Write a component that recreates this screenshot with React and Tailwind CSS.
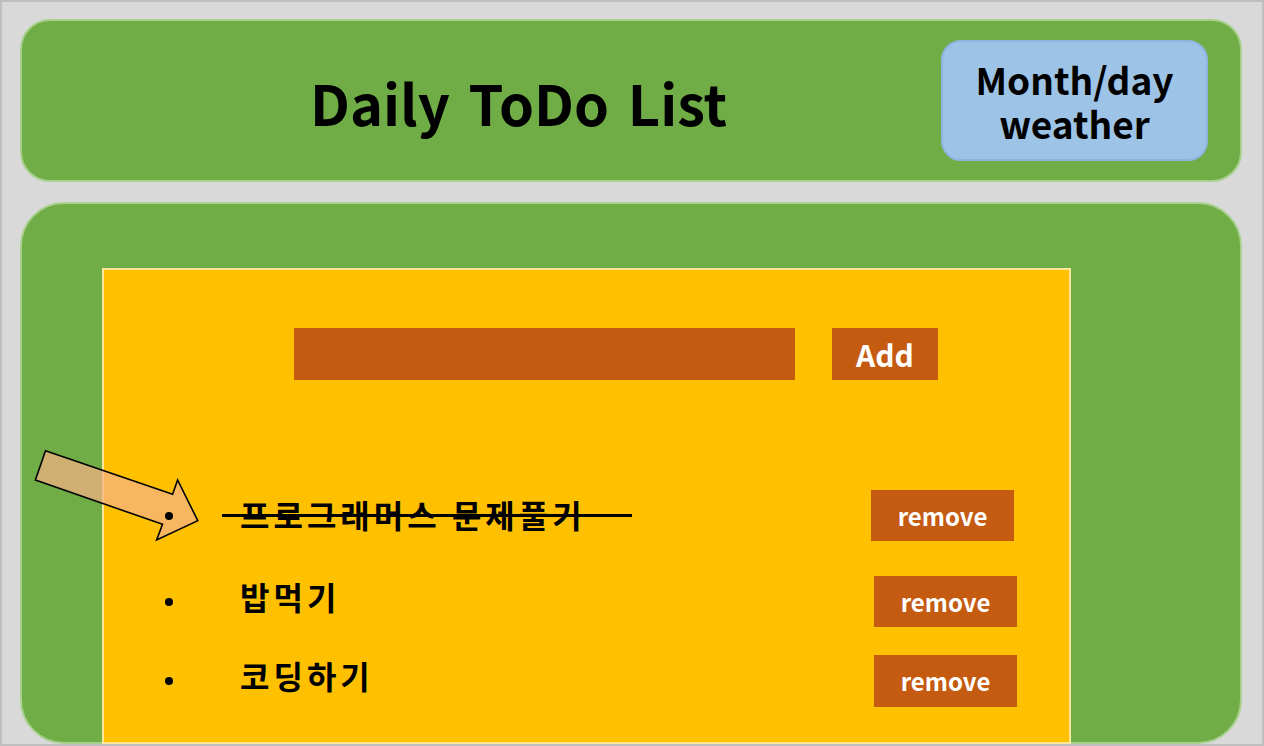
import React from 'react';

const font = { fontFamily: '"Noto Sans CJK KR", "Noto Sans", sans-serif' };

const todos = [
  { text: '프로그래머스 문제풀기', done: true, gapTop: 'mt-[110px]', h: 'h-[51px]', nudge: '-top-[2px]', btnMr: 'mr-[55px]' },
  { text: '밥먹기', done: false, gapTop: 'mt-[35px]', h: 'h-[51px]', nudge: '-top-[6px]', btnMr: 'mr-[52px]' },
  { text: '코딩하기', done: false, gapTop: 'mt-[28px]', h: 'h-[52px]', nudge: '-top-[6px]', btnMr: 'mr-[52px]' },
];

function Arrow() {
  // hand-drawn callout arrow pointing at the finished item
  return (
    <svg
      className="absolute left-[28px] top-[444px] z-[5] pointer-events-none"
      width="180"
      height="104"
      viewBox="30 446 180 104"
    >
      <polygon
        points="45.5,450.7 172.6,494.3 177.6,480 197.8,520.7 156.6,540 162.5,524.3 35.4,480"
        fill="#f4b183"
        fillOpacity="0.72"
        stroke="#000"
        strokeWidth="1.6"
        strokeLinejoin="miter"
      />
    </svg>
  );
}

function TodoRow({ item }) {
  return (
    <div className={`${item.gapTop} ${item.h} flex items-center`}>
      <span className="relative z-10 ml-[61px] w-[8px] h-[8px] rounded-full bg-black shrink-0" />
      <span className={`ml-[67px] relative ${item.nudge} text-[32px] tracking-[4px] font-bold leading-none text-black`}>
        {item.text}
        {item.done && (
          <span className="absolute left-[-18px] top-[16px] w-[410px] h-[3px] bg-black" />
        )}
      </span>
      <button
        className={`ml-auto ${item.btnMr} w-[143px] h-full bg-[#c55a11] text-white text-[24px] font-bold leading-none flex items-center justify-center`}
      >
        remove
      </button>
    </div>
  );
}

export default function App() {
  return (
    <div
      style={font}
      className="relative w-[1264px] h-[746px] overflow-hidden bg-[#d9d9d9] border-2 border-[#bfbfbf] pl-[18px] pr-[20px] pt-[17px]"
    >
      {/* Header */}
      <header className="h-[163px] rounded-[30px] bg-[#70ad47] border-2 border-[#a9d18e] flex items-center">
        <h1 className="ml-[288px] mt-[3px] text-[56px] font-bold leading-none text-black [word-spacing:6px]">
          Daily ToDo List
        </h1>
        <div className="ml-auto mr-[32px] w-[267px] h-[121px] rounded-[20px] bg-[#9dc3e6] border-2 border-[#8fb4df] flex flex-col items-center justify-center text-[37px] font-bold leading-[44px] text-black">
          <span>Month/day</span>
          <span>weather</span>
        </div>
      </header>

      {/* Body */}
      <main className="mt-[20px] h-[542px] rounded-[44px] bg-[#70ad47] border-2 border-[#a9d18e] pl-[80px] pt-[64px]">
        <section className="w-[969px] h-[476px] bg-[#ffc000] border-2 border-[#ffe699]">
          <div className="mt-[58px] ml-[190px] flex gap-[37px]">
            <div className="w-[501px] h-[52px] bg-[#c55a11]" />
            <button className="w-[106px] h-[52px] bg-[#c55a11] text-white text-[30px] font-bold leading-none flex items-center justify-center">
              Add
            </button>
          </div>

          {todos.map((t) => (
            <TodoRow key={t.text} item={t} />
          ))}
        </section>
      </main>

      <Arrow />
    </div>
  );
}
